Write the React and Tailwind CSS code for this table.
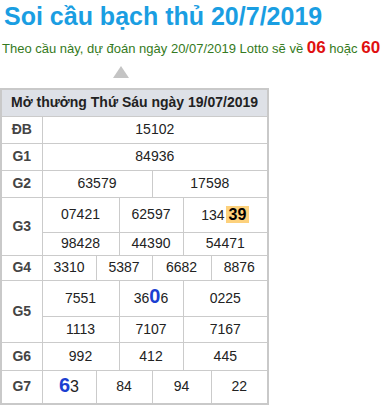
import React from "react";

const cell = "border border-[#cbcbcb] text-center align-middle p-0";
const label = cell + " font-bold text-[#444]";

function Hl({ children }) {
  return <span className="bg-[#fdd17c] font-bold text-[16px] text-black px-[3px] ml-[1px]">{children}</span>;
}

function Big({ children }) {
  return <span className="font-bold text-[20px] leading-[14px] text-[#1c3fd1]">{children}</span>;
}

function App() {
  return (
    <main className="w-[390px] h-[408px] bg-white overflow-hidden font-['Liberation_Sans',Arial,sans-serif]">
      <h1 className="text-[25px] leading-[30px] mt-[1px] pl-[4px] font-bold text-[#1a9ee2]">
        Soi cầu bạch thủ 20/7/2019
      </h1>
      <p className="mt-[7px] pl-[2px] text-[13px] leading-[20px] text-[#357a22] whitespace-nowrap">
        Theo cầu này, dự đoán ngày 20/07/2019 Lotto sẽ về{" "}
        <span className="text-[17px] font-bold text-[#e01010]">06</span> hoặc{" "}
        <span className="text-[17px] font-bold text-[#e01010]">60</span>
      </p>
      <div className="ml-[113px] mt-[7px] w-0 h-0 border-l-[8px] border-r-[8px] border-b-[12px] border-l-transparent border-r-transparent border-b-[#c4c4c4]" />
      <table className="mt-[10px] w-[267px] table-fixed border-collapse border-2 border-[#c9c9c9] text-[14px] leading-[17px] text-[#222]">
        <colgroup>
          <col className="w-[41px]" />
          <col className="w-[54px]" />
          <col className="w-[23px]" />
          <col className="w-[33px]" />
          <col className="w-[31px]" />
          <col className="w-[28px]" />
          <col className="w-[57px]" />
        </colgroup>
        <tbody>
          <tr className="h-[27px] bg-[#dee1e7]">
            <td colSpan={7} className={cell + " font-bold text-[#222]"}>Mở thưởng Thứ Sáu ngày 19/07/2019</td>
          </tr>
          <tr className="h-[27px]">
            <td className={label}>ĐB</td>
            <td colSpan={6} className={cell}>15102</td>
          </tr>
          <tr className="h-[27px]">
            <td className={label}>G1</td>
            <td colSpan={6} className={cell}>84936</td>
          </tr>
          <tr className="h-[27px]">
            <td className={label}>G2</td>
            <td colSpan={3} className={cell}>63579</td>
            <td colSpan={3} className={cell}>17598</td>
          </tr>
          <tr className="h-[35px]">
            <td rowSpan={2} className={label}>G3</td>
            <td colSpan={2} className={cell}>07421</td>
            <td colSpan={2} className={cell}>62597</td>
            <td colSpan={2} className={cell}>134<Hl>39</Hl></td>
          </tr>
          <tr className="h-[23px]">
            <td colSpan={2} className={cell}>98428</td>
            <td colSpan={2} className={cell}>44390</td>
            <td colSpan={2} className={cell}>54471</td>
          </tr>
          <tr className="h-[25px]">
            <td className={label}>G4</td>
            <td className={cell}>3310</td>
            <td colSpan={2} className={cell}>5387</td>
            <td colSpan={2} className={cell}>6682</td>
            <td className={cell}>8876</td>
          </tr>
          <tr className="h-[36px]">
            <td rowSpan={2} className={label}>G5</td>
            <td colSpan={2} className={cell}>7551</td>
            <td colSpan={2} className={cell}>36<Big>0</Big>6</td>
            <td colSpan={2} className={cell}>0225</td>
          </tr>
          <tr className="h-[26px]">
            <td colSpan={2} className={cell}>1113</td>
            <td colSpan={2} className={cell}>7107</td>
            <td colSpan={2} className={cell}>7167</td>
          </tr>
          <tr className="h-[28px]">
            <td className={label}>G6</td>
            <td colSpan={2} className={cell}>992</td>
            <td colSpan={2} className={cell}>412</td>
            <td colSpan={2} className={cell}>445</td>
          </tr>
          <tr className="h-[34px]">
            <td className={label}>G7</td>
            <td className={cell}><Big>6</Big><span className="text-[16px]">3</span></td>
            <td colSpan={2} className={cell}>84</td>
            <td colSpan={2} className={cell}>94</td>
            <td className={cell}>22</td>
          </tr>
        </tbody>
      </table>
    </main>
  );
}

export default App;
